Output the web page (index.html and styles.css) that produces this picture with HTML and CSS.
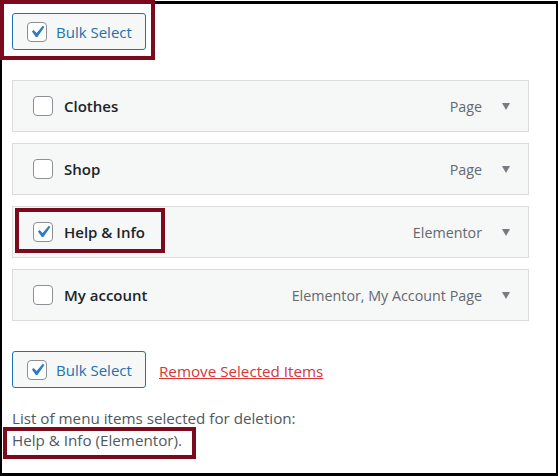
FILE: index.html
```html
<!DOCTYPE html>
<html>
<head>
<meta charset="utf-8">
<link rel="stylesheet" href="styles.css">
</head>
<body>
<div class="frame">
  <button class="bulk-btn" type="button">
    <span class="cb checked"><svg viewBox="0 0 20 20"><path d="M14.83 4.89l1.34.94-5.81 8.38H9.02L5.78 9.67l1.34-1.25 2.57 2.4z"/></svg></span>
    <span>Bulk Select</span>
  </button>

  <ul class="items">
    <li class="item">
      <span class="cb"></span>
      <span class="title">Clothes</span>
      <span class="type">Page</span>
      <span class="arrow"></span>
    </li>
    <li class="item">
      <span class="cb"></span>
      <span class="title">Shop</span>
      <span class="type">Page</span>
      <span class="arrow"></span>
    </li>
    <li class="item">
      <span class="cb checked"><svg viewBox="0 0 20 20"><path d="M14.83 4.89l1.34.94-5.81 8.38H9.02L5.78 9.67l1.34-1.25 2.57 2.4z"/></svg></span>
      <span class="title">Help &amp; Info</span>
      <span class="type">Elementor</span>
      <span class="arrow"></span>
    </li>
    <li class="item">
      <span class="cb"></span>
      <span class="title">My account</span>
      <span class="type">Elementor, My Account Page</span>
      <span class="arrow"></span>
    </li>
  </ul>

  <div class="actions">
    <button class="bulk-btn" type="button">
      <span class="cb checked"><svg viewBox="0 0 20 20"><path d="M14.83 4.89l1.34.94-5.81 8.38H9.02L5.78 9.67l1.34-1.25 2.57 2.4z"/></svg></span>
      <span>Bulk Select</span>
    </button>
    <a class="remove" href="#">Remove Selected Items</a>
  </div>

  <p class="deleted">List of menu items selected for deletion:<br>Help &amp; Info (Elementor).</p>

  <div class="hl hl-top"></div>
  <div class="hl hl-item"></div>
  <div class="hl hl-list"></div>
</div>
</body>
</html>
```

FILE: styles.css
```css
html, body {
  margin: 0;
  padding: 0;
  background: #fff;
}
body {
  font-family: "Open Sans", "Noto Sans", sans-serif;
  font-size: 15.2px;
  color: #3c434a;
}
.frame {
  position: relative;
  box-sizing: border-box;
  width: 558px;
  height: 475px;
  margin-top: 1px;
  border-style: solid;
  border-color: #000;
  border-width: 3px 2px 3px 2px;
  padding: 9px 27px 0 10px;
}
.bulk-btn {
  box-sizing: border-box;
  display: flex;
  align-items: center;
  gap: 9px;
  width: 134px;
  height: 37px;
  padding: 0 0 0 14px;
  border: 1px solid #2271b1;
  border-radius: 3px;
  background: #f6f7f7;
  color: #2271b1;
  font-family: inherit;
  font-size: 15px;
  cursor: pointer;
}
.cb {
  box-sizing: border-box;
  flex: none;
  display: inline-flex;
  align-items: center;
  justify-content: center;
  width: 20px;
  height: 20px;
  border: 1px solid #8c8f94;
  border-radius: 4px;
  background: #fff;
}
.cb svg {
  width: 26px;
  height: 26px;
  fill: #2f7cc2;
  margin: -3px;
}
.items {
  list-style: none;
  margin: 30px 0 0;
  padding: 0;
  display: flex;
  flex-direction: column;
  gap: 11px;
}
.item {
  box-sizing: border-box;
  display: flex;
  align-items: center;
  height: 52px;
  padding: 0 18px 0 20px;
  background: #f6f7f7;
  border: 1px solid #dcdcde;
}
.title {
  margin-left: 11px;
  font-weight: 600;
  color: #1d2327;
  font-size: 15px;
}
.type {
  margin-left: auto;
  color: #646970;
  font-size: 14.3px;
}
.arrow {
  margin-left: 20px;
  width: 0;
  height: 0;
  border-left: 4.5px solid transparent;
  border-right: 4.5px solid transparent;
  border-top: 7px solid #787c82;
}
.actions {
  display: flex;
  align-items: center;
  gap: 13px;
  margin-top: 30px;
}
.remove {
  color: #d63638;
  text-decoration: underline;
  font-size: 15.2px;
  margin-top: 2px;
}
.deleted {
  margin: 19px 0 0 0;
  line-height: 22px;
  font-size: 15.2px;
  color: #50575e;
}
.hl {
  position: absolute;
  box-sizing: border-box;
  border: 4px solid #7a0a1c;
  pointer-events: none;
}
.hl-top {
  left: -2px;
  top: -4px;
  width: 155px;
  height: 60px;
}
.hl-item {
  left: 13px;
  top: 204px;
  width: 150px;
  height: 45px;
}
.hl-list {
  left: 1px;
  top: 423px;
  width: 193px;
  height: 32px;
}
```
